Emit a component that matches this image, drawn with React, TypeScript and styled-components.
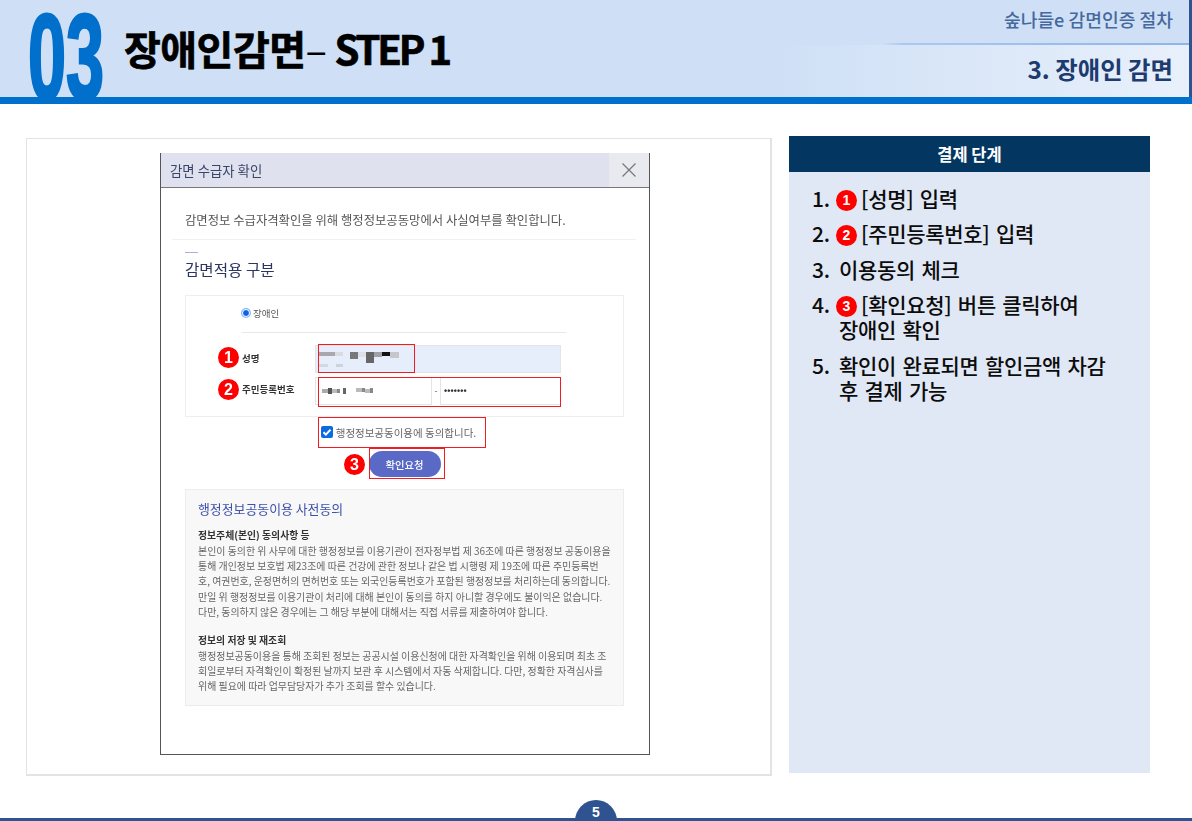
import React from "react";
import styled, { createGlobalStyle } from "styled-components";

const Global = createGlobalStyle`
  html, body { margin: 0; padding: 0; background: #fff; }
  * { box-sizing: border-box; }
  body { font-family: "Noto Sans CJK KR", "Noto Sans", sans-serif; }
`;
const KR = `"Noto Sans CJK KR", "Noto Sans", sans-serif`;
const Page = styled.div`
  width: 1192px; height: 821px; overflow: hidden; display: flex; flex-direction: column; background: #fff; position: relative;
`;
const Header = styled.header`
  height: 104px; flex: none; display: flex; background: #cfe0f6; border-bottom: 7px solid #0070cc; overflow: hidden;
`;
const BigNum = styled.div`
  width: 124px; flex: none; height: 97px; overflow: hidden; padding-left: 28px;
`;
const BigDigits = styled.div`
  font-family: "Liberation Sans", sans-serif; font-weight: 700; font-size: 120px; line-height: 97px; color: #0070cc;
  transform: scaleX(.57); transform-origin: 0 0; white-space: nowrap; margin-top: 9px;
  -webkit-text-stroke: 3px #0070cc;
`;
const Title = styled.h1`
  margin: 0; flex: none; width: 656px; padding-top: 19px; font-family: ${KR}; font-weight: 700; font-size: 40px; line-height: 58px; color: #000;
  letter-spacing: -3.1px; white-space: nowrap; -webkit-text-stroke: .7px #000; display: flex;
`;
const TitleKr = styled.span`
  letter-spacing: -.5px;
`;
const TitleDash = styled.span`
  font-weight: 400; -webkit-text-stroke: 0; letter-spacing: 0; width: 29px;
`;
const HeadRight = styled.div`
  flex: 1; display: flex; flex-direction: column; border-right: 3px solid #2f5290;
`;
const HeadTop = styled.div`
  height: 45px; padding: 6px 16px 0 0; text-align: right; font-family: ${KR}; font-weight: 500; font-size: 18.2px; line-height: 26px; color: #46699d;
  border-bottom: 2px solid transparent; border-image: linear-gradient(90deg, #cfe0f6 0%, #cfe0f6 25%, #a9c9f0 30%, #8db5e8 100%) 1;
`;
const HeadBottom = styled.div`
  flex: 1; text-align: right; padding: 6px 16px 0 0; font-family: ${KR}; font-weight: 700; font-size: 24.4px; line-height: 36px; color: #1d3b6e;
  background: linear-gradient(90deg, #cfe0f6 0%, #e8f0fb 100%);
`;
const Main = styled.main`
  flex: 1; display: flex; align-items: flex-start; padding: 32px 0 0 26px; gap: 17px;
`;
const Frame = styled.section`
  margin-top: 2px; width: 746px; height: 638px; border: 1px solid #e3e3e3; border-width: 1px 2px 2px 1px; padding: 14px 0 0 133px; display: flex;
`;
const Dialog = styled.div`
  width: 490px; height: 602px; background: #fff; border: 1px solid #555; border-top: none; display: flex; flex-direction: column; position: relative;
  font-family: ${KR}; filter: blur(.3px);
`;
const DlgBar = styled.div`
  height: 35px; flex: none; display: flex; justify-content: space-between; background: #dfe2ee; border-bottom: 1px solid #777;
`;
const DlgTitle = styled.div`
  padding-left: 9px; font-size: 13.4px; line-height: 34px; color: #3b4468;
`;
const DlgClose = styled.div`
  width: 40px; background: #e9eaef; display: flex; align-items: center; justify-content: center;
`;
const Intro = styled.p`
  margin: 22px 13px 0 11px; padding: 0 0 9px 13px; font-size: 12.35px; line-height: 20px; color: #555; border-bottom: 1px solid #f0f0f0; white-space: nowrap;
`;
const Accent = styled.div`
  width: 13px; height: 1px; background: #a6b0d8; margin: 12px 0 0 24px;
`;
const SecTitle = styled.h2`
  margin: 4px 0 0 24px; font-size: 15.6px; line-height: 24px; font-weight: 400; color: #2b3560;
`;
const FormBox = styled.div`
  margin: 14px 25px 0 24px; height: 122px; border: 1px solid #eee; padding: 0 62px 0 56px;
`;
const RadioRow = styled.div`
  height: 37px; border-bottom: 1px solid #e8e8e8; display: flex; align-items: center; gap: 3px; font-size: 9.5px; color: #555; padding-bottom: 2px; margin-right: -5px;
`;
const Radio = styled.span`
  width: 8px; height: 8px; border-radius: 50%; background: #0a66e8; border: 1.5px solid #fff; box-shadow: 0 0 0 1px #8bb8f5;
`;
const FieldRow = styled.div`
  display: flex; align-items: stretch; height: 28px; margin-top: ${p => p.$mt}px;
`;
const Label = styled.div`
  width: 73px; flex: none; font-size: 9.5px; font-weight: 700; line-height: ${p => p.$lh}px; color: #333;
`;
const Field = styled.div`
  flex: ${p => p.$w ? "none" : 1}; width: ${p => p.$w || 0}px; background: ${p => p.$fill ? "#e7eefb" : "#fff"}; border: 1px solid #e4e4e4; padding-left: ${p => p.$pl || 3}px; display: flex; flex-direction: column; justify-content: center; gap: 1px;
`;
const Dash = styled.div`
  width: 8px; font-size: 9px; line-height: 28px; text-align: center; color: #666; flex: none;
`;
const Dots = styled.span`
  font-size: 9px; line-height: 10px; color: #333; letter-spacing: .1px; font-family: "Liberation Sans", sans-serif; font-weight: 700;
`;
const BlurRow = styled.div`
  display: flex; filter: blur(.7px);
`;
const Pix = styled.i`
  display: block; width: ${p => p.$w}px; height: ${p => p.$h || 4}px; background: ${p => p.$c}; margin-top: ${p => p.$t || 0}px;
`;
const AgreeRow = styled.label`
  display: flex; align-items: center; justify-content: center; height: 30px; margin-left: 1px; padding-right: 14px; gap: 3px;
  font-size: 10.5px; color: #666; white-space: nowrap;
`;
const Check = styled.span`
  width: 12px; height: 12px; background: #0a6ce0; border-radius: 2px; display: flex; align-items: center; justify-content: center; flex: none;
`;
const BtnRow = styled.div`
  display: flex; justify-content: center; padding-right: 1px; margin-top: 4px;
`;
const Btn = styled.button`
  width: 72px; height: 26px; border: none; border-radius: 13px; background: #5a69c6; color: #fff; font-family: ${KR}; font-size: 10.3px; font-weight: 500; padding: 0;
`;
const Notice = styled.div`
  margin: 12px 25px 0 24px; height: 217px; background: #f8f8f8; border: 1px solid #ececec; padding: 10px 12px 0 12px;
`;
const NoticeTitle = styled.h3`
  margin: 0 0 10px; font-size: 12.9px; line-height: 18px; font-weight: 400; color: #3d50ad; white-space: nowrap;
`;
const NoticeSub = styled.div`
  font-size: 9.85px; font-weight: 700; line-height: 15px; color: #333; white-space: nowrap;
  margin-top: ${p => p.$mt || 0}px;
`;
const NoticeLine = styled.div`
  font-size: 9.95px; line-height: 15.2px; color: #666; white-space: nowrap;
`;
const Box = styled.div`
  position: absolute; left: ${p => p.$x}px; top: ${p => p.$y}px; width: ${p => p.$w}px; height: ${p => p.$h}px; border: 1px solid #f01c22;
`;
const Mark = styled.span`
  position: absolute; left: ${p => p.$x}px; top: ${p => p.$y}px; width: 21px; height: 21px; border-radius: 50%; background: #f00; color: #fff;
  font-family: "Liberation Sans", sans-serif; font-weight: 700; font-size: 16px; line-height: 21px; text-align: center;
`;
const Panel = styled.aside`
  width: 361px; height: 637px; background: #e1e8f5; flex: none;
`;
const PanelHead = styled.div`
  height: 36px; background: #033660; color: #fff; font-family: ${KR}; font-weight: 700; font-size: 16.5px; line-height: 36px; text-align: center;
`;
const Steps = styled.ol`
  list-style: none; margin: 0; padding: 14px 0 0 23px; font-family: ${KR}; font-weight: 500; font-size: 21px; color: #0c0c0c; letter-spacing: -.3px; word-spacing: 2px;
`;
const Step = styled.li`
  display: flex; line-height: 25.2px; margin-bottom: ${p => p.$mb ?? 10.2}px;
`;
const StepNum = styled.span`
  width: 27px; flex: none;
`;
const StepBody = styled.span`
  display: block; white-space: nowrap;
`;
const Dot = styled.span`
  display: inline-block; width: 21px; height: 21px; border-radius: 50%; background: #f00; color: #fff; font-family: "Liberation Sans", sans-serif;
  font-size: 14px; font-weight: 700; line-height: 21px; text-align: center; vertical-align: middle; margin: -3px 4px -1px -3px; letter-spacing: 0;
`;
const Footer = styled.footer`
  position: absolute; left: 0; right: 0; bottom: 0; height: 3px; background: #2f5290;
`;
const PageNo = styled.div`
  position: absolute; left: 575px; bottom: 0; width: 42px; height: 21px; border-radius: 21px 21px 0 0; background: #2f5290; color: #fff;
  font-family: "Liberation Sans", sans-serif; font-size: 14px; font-weight: 700; line-height: 25px; text-align: center;
`;

export default function App() {
  return (
    <Page>
      <Global />
      <Header>
        <BigNum><BigDigits>03</BigDigits></BigNum>
        <Title><TitleKr>장애인감면</TitleKr><TitleDash>–</TitleDash>STEP 1</Title>
        <HeadRight>
          <HeadTop>숲나들e 감면인증 절차</HeadTop>
          <HeadBottom>3. 장애인 감면</HeadBottom>
        </HeadRight>
      </Header>
      <Main>
        <Frame>
          <Dialog>
            <DlgBar>
              <DlgTitle>감면 수급자 확인</DlgTitle>
              <DlgClose>
                <svg width="16" height="16" viewBox="0 0 16 16" fill="none" stroke="#777" strokeWidth="1.2">
                  <path d="M1.5 1.5l13 13M14.5 1.5l-13 13" />
                </svg>
              </DlgClose>
            </DlgBar>
            <Intro>감면정보 수급자격확인을 위해 행정정보공동망에서 사실여부를 확인합니다.</Intro>
            <Accent />
            <SecTitle>감면적용 구분</SecTitle>
            <FormBox>
              <RadioRow><Radio />장애인</RadioRow>
              <FieldRow $mt={12}>
                <Label $lh={26}>성명</Label>
                <Field $fill>
                  <BlurRow>
                    <Pix $w={16} $c="#a8a8ae" />
                    <Pix $w={8} $c="#d8dbe2" />
                    <Pix $w={7} $c="#e7eefb" />
                    <Pix $w={8} $c="#77777c" $h={7} />
                    <Pix $w={8} $c="#dde0e8" $h={5} />
                    <Pix $w={8} $c="#666" $h={11} />
                    <Pix $w={8} $c="#a0a0a6" $h={5} />
                    <Pix $w={8} $c="#111" $h={4} />
                    <Pix $w={9} $c="#c6c6cc" $h={6} />
                  </BlurRow>
                  <BlurRow>
                    <Pix $w={9} $c="#d5d8e0" $h={3} />
                    <Pix $w={8} $c="#e7eefb" $h={3} />
                    <Pix $w={7} $c="#cfd2da" $h={3} />
                  </BlurRow>
                </Field>
              </FieldRow>
              <FieldRow $mt={4}>
                <Label $lh={24}>주민등록번호</Label>
                <Field $w={117} $pl={6}>
                  <BlurRow>
                    <Pix $w={6} $c="#aaa" $t={1} />
                    <Pix $w={4} $c="#555" $h={6} />
                    <Pix $w={5} $c="#bbb" $t={1} />
                    <Pix $w={3} $c="#888" $t={1} />
                    <Pix $w={3} $c="#fff" />
                    <Pix $w={3} $c="#666" $h={6} />
                    <Pix $w={10} $c="#fff" />
                    <Pix $w={6} $c="#bbb" />
                    <Pix $w={3} $c="#888" />
                    <Pix $w={5} $c="#bbb" $t={1} />
                    <Pix $w={3} $c="#888" $h={5} />
                  </BlurRow>
                </Field>
                <Dash>-</Dash>
                <Field><Dots>•••••••</Dots></Field>
              </FieldRow>
            </FormBox>
            <AgreeRow>
              <Check>
                <svg width="10" height="10" viewBox="0 0 10 10" fill="none" stroke="#fff" strokeWidth="2"><path d="M1.5 5.2l2.4 2.4 4.6-5" /></svg>
              </Check>
              행정정보공동이용에 동의합니다.
            </AgreeRow>
            <BtnRow><Btn>확인요청</Btn></BtnRow>
            <Notice>
              <NoticeTitle>행정정보공동이용 사전동의</NoticeTitle>
              <NoticeSub>정보주체(본인) 동의사항 등</NoticeSub>
              <NoticeLine>본인이 동의한 위 사무에 대한 행정정보를 이용기관이 전자정부법 제 36조에 따른 행정정보 공동이용을</NoticeLine>
              <NoticeLine>통해 개인정보 보호법 제23조에 따른 건강에 관한 정보나 같은 법 시행령 제 19조에 따른 주민등록번</NoticeLine>
              <NoticeLine>호, 여권번호, 운정면허의 면허번호 또는 외국인등록번호가 포함된 행정정보를 처리하는데 동의합니다.</NoticeLine>
              <NoticeLine>만일 위 행정정보를 이용기관이 처리에 대해 본인이 동의를 하지 아니할 경우에도 불이익은 없습니다.</NoticeLine>
              <NoticeLine>다만, 동의하지 않은 경우에는 그 해당 부분에 대해서는 직접 서류를 제출하여야 합니다.</NoticeLine>
              <NoticeSub $mt={14}>정보의 저장 및 재조회</NoticeSub>
              <NoticeLine>행정정보공동이용을 통해 조회된 정보는 공공시설 이용신청에 대한 자격확인을 위해 이용되며 최초 조</NoticeLine>
              <NoticeLine>회일로부터 자격확인이 확정된 날까지 보관 후 시스템에서 자동 삭제합니다. 다만, 정확한 자격심사를</NoticeLine>
              <NoticeLine>위해 필요에 따라 업무담당자가 추가 조회를 할수 있습니다.</NoticeLine>
            </Notice>
            <Box $x={157} $y={191} $w={97} $h={29} />
            <Box $x={157} $y={224} $w={243} $h={30} />
            <Box $x={157} $y={264} $w={168} $h={31} />
            <Box $x={208} $y={295} $w={76} $h={31} />
            <Mark $x={57} $y={194}>1</Mark>
            <Mark $x={57} $y={226}>2</Mark>
            <Mark $x={183} $y={301}>3</Mark>
          </Dialog>
        </Frame>
        <Panel>
          <PanelHead>결제 단계</PanelHead>
          <Steps>
            <Step><StepNum>1.</StepNum><StepBody><Dot>1</Dot>[성명] 입력</StepBody></Step>
            <Step><StepNum>2.</StepNum><StepBody><Dot>2</Dot>[주민등록번호] 입력</StepBody></Step>
            <Step><StepNum>3.</StepNum><StepBody>이용동의 체크</StepBody></Step>
            <Step><StepNum>4.</StepNum><StepBody><Dot>3</Dot>[확인요청] 버튼 클릭하여<br />장애인 확인</StepBody></Step>
            <Step $mb={0}><StepNum>5.</StepNum><StepBody>확인이 완료되면 할인금액 차감<br />후 결제 가능</StepBody></Step>
          </Steps>
        </Panel>
      </Main>
      <Footer />
      <PageNo>5</PageNo>
    </Page>
  );
}
